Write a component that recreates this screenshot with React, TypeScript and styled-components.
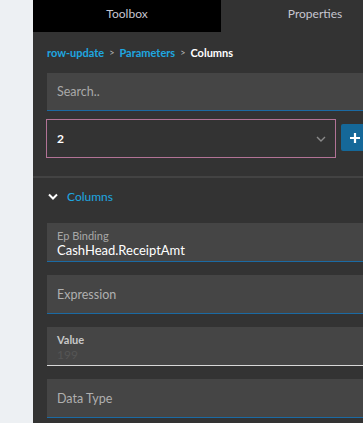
import React from "react";
import styled, { createGlobalStyle } from "styled-components";

const GlobalStyle = createGlobalStyle`
  html, body { margin: 0; padding: 0; }
  body {
    background: #edf0f3;
    overflow: hidden;
    font-family: Lato, "Open Sans", sans-serif;
  }
`;

const Page = styled.div`
  display: flex;
  height: 423px;
  padding-left: 33px;
  background: #edf0f3;
`;

const Panel = styled.div`
  width: 376px;
  flex-shrink: 0;
  background: #333333;
  display: flex;
  flex-direction: column;
`;

const Tabs = styled.div`
  display: grid;
  grid-template-columns: 1fr 1fr;
  height: 32px;
`;

const Tab = styled.div<{ $active?: boolean }>`
  display: flex;
  align-items: center;
  justify-content: center;
  background: ${(p) => (p.$active ? "#000000" : "#333333")};
  color: #c6c6d0;
  font-size: 12px;
  padding-bottom: 6px;
`;

const Breadcrumb = styled.div`
  height: 41px;
  display: flex;
  align-items: center;
  padding: 0 14px;
  gap: 5px;
  font-size: 11px;
  font-weight: 700;
`;

const Crumb = styled.span<{ $current?: boolean }>`
  color: ${(p) => (p.$current ? "#ffffff" : "#1ea7e0")};
`;

const Sep = styled.span`
  color: #bdbdbd;
  font-size: 9px;
  font-weight: 400;
`;

const Body = styled.div`
  padding: 0 14px;
  display: flex;
  flex-direction: column;
`;

const SearchBox = styled.div`
  height: 37px;
  background: #454545;
  border-bottom: 1px solid #1b6aa3;
  display: flex;
  align-items: center;
  padding-left: 10px;
  color: #a9a9a9;
  font-size: 12.5px;
`;

const SelectRow = styled.div`
  display: flex;
  gap: 5px;
  margin-top: 8px;
  margin-left: -1px;
`;

const Select = styled.div`
  width: 290px;
  height: 39px;
  box-sizing: border-box;
  flex-shrink: 0;
  border: 1px solid #b27396;
  display: flex;
  align-items: center;
  justify-content: space-between;
  padding: 0 9px 0 10px;
  color: #ffffff;
  font-size: 12px;
  font-weight: 700;
`;

const PlusButton = styled.div`
  width: 28px;
  height: 27px;
  flex-shrink: 0;
  margin-top: 5px;
  border-radius: 2px;
  background: #156899;
  display: flex;
  align-items: center;
  justify-content: center;
`;

const Divider = styled.div`
  height: 2px;
  background: #434343;
  margin-top: 18px;
`;

const SectionHeader = styled.div`
  height: 36px;
  display: flex;
  align-items: center;
  padding-left: 15px;
  gap: 9px;
  color: #1ea7e0;
  font-size: 12px;
`;

const Fields = styled.div`
  padding: 9px 14px 0;
  display: flex;
  flex-direction: column;
  gap: 13px;
`;

const Field = styled.div<{ $line?: string; $labelled?: boolean }>`
  height: 38px;
  box-sizing: border-box;
  height: 39px;
  background: #454545;
  border-bottom: 1px solid ${(p) => p.$line || "#1b6aa3"};
  display: flex;
  flex-direction: column;
  justify-content: center;
  padding: ${(p) => (p.$labelled ? "3px 0 0 10px" : "0 0 0 10px")};
`;

const Placeholder = styled.div`
  color: #b0b0b0;
  font-size: 12.5px;
`;

const Label = styled.div<{ $strong?: boolean }>`
  color: ${(p) => (p.$strong ? "#c8c8c8" : "#a8a8a8")};
  font-size: 11px;
  font-weight: ${(p) => (p.$strong ? 700 : 400)};
  line-height: 13px;
`;

const Value = styled.div<{ $dim?: boolean }>`
  color: ${(p) => (p.$dim ? "#555555" : "#ffffff")};
  font-size: ${(p) => (p.$dim ? "12px" : "13px")};
  line-height: 17px;
`;

export default function App() {
  return (
    <>
      <GlobalStyle />
      <Page>
        <Panel>
          <Tabs>
            <Tab $active>Toolbox</Tab>
            <Tab>Properties</Tab>
          </Tabs>
          <Breadcrumb>
            <Crumb>row-update</Crumb>
            <Sep>&gt;</Sep>
            <Crumb>Parameters</Crumb>
            <Sep>&gt;</Sep>
            <Crumb $current>Columns</Crumb>
          </Breadcrumb>
          <Body>
            <SearchBox>Search..</SearchBox>
            <SelectRow>
              <Select>
                <span>2</span>
                <svg width="10" height="6" viewBox="0 0 10 6">
                  <path d="M1 1 L5 5 L9 1" fill="none" stroke="#8a8a8a" strokeWidth="1.4" />
                </svg>
              </Select>
              <PlusButton>
                <svg width="12" height="12" viewBox="0 0 12 12">
                  <path d="M6 1 V11 M1 6 H11" stroke="#ffffff" strokeWidth="2.2" />
                </svg>
              </PlusButton>
            </SelectRow>
          </Body>
          <Divider />
          <SectionHeader>
            <svg width="10" height="7" viewBox="0 0 10 7">
              <path d="M1 1.5 L5 5.5 L9 1.5" fill="none" stroke="#ffffff" strokeWidth="2" />
            </svg>
            <span>Columns</span>
          </SectionHeader>
          <Fields>
            <Field $labelled>
              <Label>Ep Binding</Label>
              <Value>CashHead.ReceiptAmt</Value>
            </Field>
            <Field>
              <Placeholder>Expression</Placeholder>
            </Field>
            <Field $labelled $line="#d8d8d8">
              <Label $strong>Value</Label>
              <Value $dim>199</Value>
            </Field>
            <Field>
              <Placeholder>Data Type</Placeholder>
            </Field>
          </Fields>
        </Panel>
      </Page>
    </>
  );
}
